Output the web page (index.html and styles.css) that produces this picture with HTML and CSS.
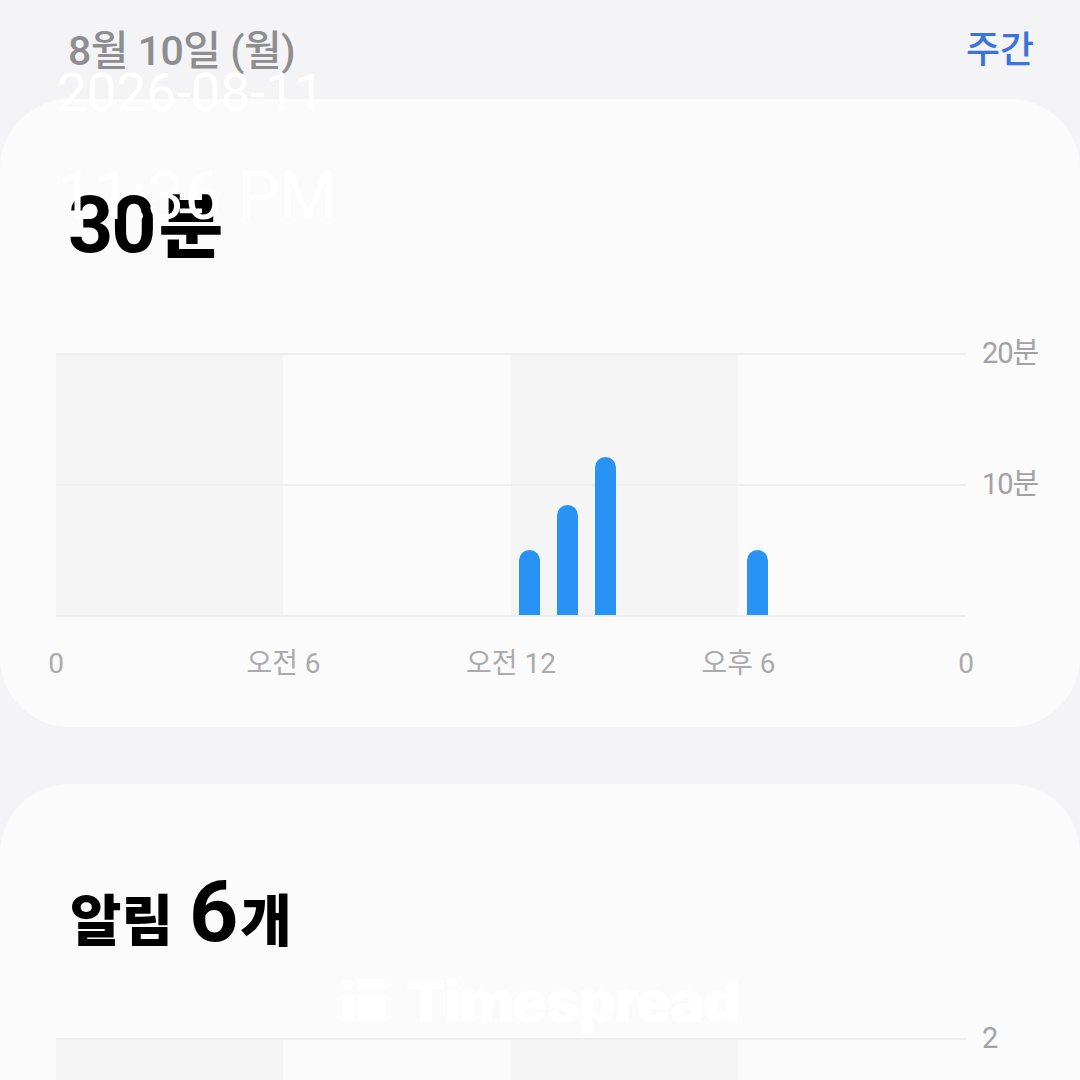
FILE: index.html
```html
<!DOCTYPE html>
<html lang="ko">
<head>
<meta charset="utf-8">
<title>화면 시간</title>
<link rel="stylesheet" href="styles.css">
</head>
<body>
  <header class="header">
    <span class="date">8월 10일 (월)</span>
    <span class="period">주간</span>
  </header>

  <section class="card card-usage">
    <h1 class="title"><span class="num">30</span><span class="unit">분</span></h1>
    <div class="chart">
      <div class="plot">
        <div class="midline"></div>
        <div class="slot"></div><div class="slot"></div><div class="slot"></div><div class="slot"></div>
        <div class="slot"></div><div class="slot"></div><div class="slot"></div><div class="slot"></div>
        <div class="slot"></div><div class="slot"></div><div class="slot"></div><div class="slot"></div>
        <div class="slot"><div class="bar" style="height:65px"></div></div>
        <div class="slot"><div class="bar" style="height:110px"></div></div>
        <div class="slot"><div class="bar" style="height:158px"></div></div>
        <div class="slot"></div>
        <div class="slot"></div><div class="slot"></div>
        <div class="slot"><div class="bar" style="height:65px"></div></div>
        <div class="slot"></div><div class="slot"></div><div class="slot"></div><div class="slot"></div><div class="slot"></div>
      </div>
      <div class="yaxis">
        <span class="ylabel">20분</span>
        <span class="ylabel">10분</span>
        <span class="ylabel"></span>
      </div>
      <div class="xaxis">
        <span class="xlabel">0</span>
        <span class="xlabel">오전 6</span>
        <span class="xlabel">오전 12</span>
        <span class="xlabel">오후 6</span>
        <span class="xlabel">0</span>
      </div>
    </div>
  </section>

  <section class="card card-alerts">
    <h2 class="title2"><span class="unit2">알림 </span><span class="num2">6</span><span class="unit2">개</span></h2>
    <div class="chart">
      <div class="plot plot2"></div>
      <div class="yaxis yaxis2">
        <span class="ylabel">2</span>
      </div>
    </div>
  </section>

  <div class="stamp">
    <div class="stamp-date">2026-08-11</div>
    <div class="stamp-time">11:36 PM</div>
  </div>

  <div class="brand">
    <svg class="brand-icon" width="44" height="44" viewBox="0 0 44 44" aria-hidden="true">
      <circle cx="6" cy="6" r="6" fill="#ffffff"/>
      <rect x="16" y="0" width="28" height="11" fill="#ffffff"/>
      <rect x="0" y="15" width="12" height="28" fill="#ffffff"/>
      <rect x="16" y="15" width="28" height="28" fill="#ffffff"/>
    </svg>
    <span class="brand-name">Timespread</span>
  </div>
</body>
</html>
```

FILE: styles.css
```css
html, body {
  margin: 0;
  padding: 0;
}

body {
  width: 1080px;
  height: 1080px;
  overflow: hidden;
  position: relative;
  background: #f4f4f6;
  font-family: Roboto, "Noto Sans CJK KR", sans-serif;
}

.header {
  height: 99px;
  box-sizing: border-box;
  display: flex;
  justify-content: space-between;
  align-items: center;
  padding: 0 46px 6px 68px;
}

.date {
  font-size: 41px;
  font-weight: 500;
  color: #8e8e90;
  letter-spacing: -0.5px;
}

.period {
  font-size: 37px;
  font-weight: 500;
  color: #3a73d9;
}

.card {
  background: #fbfbfb;
  border-radius: 70px;
}

.card-usage {
  height: 628px;
  box-sizing: border-box;
  padding-top: 86px;
}

.title {
  margin: 0 0 0 68px;
  height: 80px;
  display: flex;
  align-items: baseline;
  font-weight: 700;
  color: #000;
  line-height: 80px;
}

.num {
  font-size: 79px;
  letter-spacing: -2px;
}

.unit {
  font-size: 70px;
  font-weight: 800;
  margin-left: 4px;
}

.chart {
  margin: 88px 0 0 56px;
  display: grid;
  grid-template-columns: 910px auto;
  column-gap: 16px;
}

.plot {
  position: relative;
  height: 264px;
  display: grid;
  grid-template-columns: repeat(24, 1fr);
  align-items: end;
  border-top: 2px solid #eeeeee;
  border-bottom: 2px solid #eeeeee;
  box-sizing: border-box;
  background: linear-gradient(to right,
    #f5f5f5 0, #f5f5f5 25%,
    #fbfbfb 25%, #fbfbfb 50%,
    #f5f5f5 50%, #f5f5f5 75%,
    #fbfbfb 75%, #fbfbfb 100%);
}

.midline {
  position: absolute;
  left: 0;
  right: 0;
  top: 129px;
  height: 2px;
  background: #eeeeee;
}

.slot {
  display: flex;
  justify-content: center;
  align-items: flex-end;
  height: 100%;
  position: relative;
}

.bar {
  width: 21px;
  background: #2893f5;
  border-radius: 10.5px 10.5px 0 0;
}

.yaxis {
  height: 262px;
  display: flex;
  flex-direction: column;
  justify-content: space-between;
}

.ylabel {
  display: block;
  height: 0;
  line-height: 0;
  font-size: 29px;
  color: #a2a2a4;
  letter-spacing: -1px;
}

.xaxis {
  grid-column: 1 / 2;
  display: flex;
  justify-content: space-between;
  margin-top: 47px;
  height: 0;
}

.xlabel {
  width: 0;
  display: flex;
  justify-content: center;
  white-space: nowrap;
  line-height: 0;
  font-size: 28px;
  color: #ababad;
  letter-spacing: 0;
}

.card-alerts {
  margin-top: 57px;
  height: 600px;
  box-sizing: border-box;
  padding-top: 92px;
}

.title2 {
  margin: 0 0 0 70px;
  height: 72px;
  display: flex;
  align-items: baseline;
  line-height: 72px;
  font-weight: 700;
  color: #000;
}

.unit2 {
  font-size: 56px;
  font-weight: 800;
  white-space: pre;
}

.num2 {
  font-size: 86px;
  font-weight: 700;
  margin: 0 2px 0 2px;
}

.card-alerts .chart {
  margin-top: 90px;
}

.plot2 {
  height: 200px;
  border-bottom: none;
}

.yaxis2 {
  height: 200px;
  justify-content: flex-start;
}

.stamp {
  position: absolute;
  left: 57px;
  top: 67px;
  color: #ffffff;
  font-family: Roboto, sans-serif;
  font-weight: 400;
}

.stamp-date {
  font-size: 53px;
  line-height: 53px;
}

.stamp-time {
  font-size: 66px;
  line-height: 66px;
  margin-top: 44px;
}

.brand {
  position: absolute;
  left: 342px;
  top: 976px;
  display: flex;
  align-items: center;
  gap: 20px;
}

.brand-icon {
  display: block;
}

.brand-name {
  font-family: Inter, sans-serif;
  font-weight: 900;
  font-size: 58px;
  letter-spacing: -1.7px;
  color: #ffffff;
  line-height: 50px;
}
```
